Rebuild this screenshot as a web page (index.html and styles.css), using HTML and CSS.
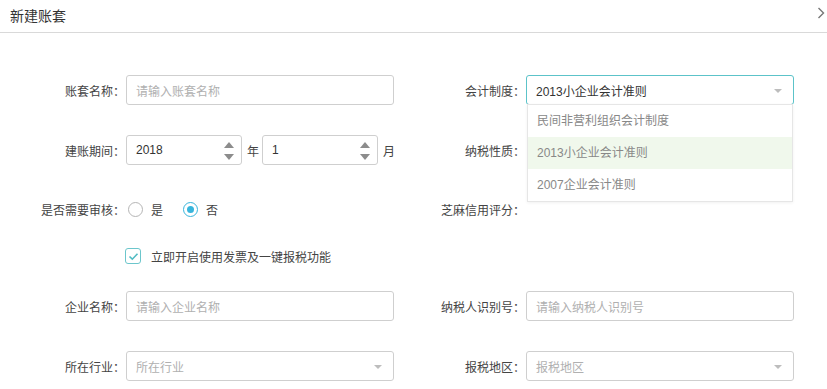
FILE: index.html
```html
<!DOCTYPE html>
<html lang="zh">
<head>
<meta charset="utf-8">
<link rel="stylesheet" href="styles.css">
</head>
<body>
<div class="header">
  <span class="title">新建账套</span>
  <svg class="chev" width="8" height="12" viewBox="0 0 8 12"><path d="M1.5 1 L6.5 6 L1.5 11" fill="none" stroke="#777" stroke-width="1.4"/></svg>
</div>
<div class="form">
  <div class="row r1">
    <label class="lbl">账套名称：</label>
    <div class="ctl"><div class="input ph">请输入账套名称</div></div>
    <label class="lbl">会计制度：</label>
    <div class="ctl sel-wrap">
      <div class="input focus">2013小企业会计准则<span class="caret"></span></div>
      <ul class="dropdown">
        <li>民间非营利组织会计制度</li>
        <li class="active">2013小企业会计准则</li>
        <li>2007企业会计准则</li>
      </ul>
    </div>
  </div>
  <div class="row r2">
    <label class="lbl">建账期间：</label>
    <div class="ctl period">
      <div class="input num">2018<span class="spin"><i class="up"></i><i class="down"></i></span></div>
      <span class="unit">年</span>
      <div class="input num">1<span class="spin"><i class="up"></i><i class="down"></i></span></div>
      <span class="unit">月</span>
    </div>
    <label class="lbl">纳税性质：</label>
    <div class="ctl"></div>
  </div>
  <div class="row r3">
    <label class="lbl">是否需要审核：</label>
    <div class="ctl radios">
      <span class="radio"></span><span class="rtxt">是</span>
      <span class="radio on"></span><span class="rtxt">否</span>
    </div>
    <label class="lbl">芝麻信用评分：</label>
    <div class="ctl"></div>
  </div>
  <div class="row r4">
    <div class="lbl"></div>
    <div class="ctl check">
      <span class="cbox"><svg width="11" height="9" viewBox="0 0 11 9"><path d="M1.5 4.5 L4.3 7.2 L9.5 1.8" fill="none" stroke="#52bcc4" stroke-width="1.6"/></svg></span>
      <span>立即开启使用发票及一键报税功能</span>
    </div>
  </div>
  <div class="row r5">
    <label class="lbl">企业名称：</label>
    <div class="ctl"><div class="input ph">请输入企业名称</div></div>
    <label class="lbl">纳税人识别号：</label>
    <div class="ctl"><div class="input ph">请输入纳税人识别号</div></div>
  </div>
  <div class="row r6">
    <label class="lbl">所在行业：</label>
    <div class="ctl"><div class="input ph">所在行业<span class="caret"></span></div></div>
    <label class="lbl">报税地区：</label>
    <div class="ctl"><div class="input ph">报税地区<span class="caret"></span></div></div>
  </div>
</div>
</body>
</html>
```
FILE: styles.css
```css
* { box-sizing: border-box; }
body {
  margin: 0;
  background: #fff;
  font-family: "Liberation Sans", "Noto Sans CJK SC", sans-serif;
  font-size: 12px;
  color: #444;
}
.header {
  height: 33px;
  border-bottom: 1px solid #d9d9d9;
  display: flex;
  align-items: center;
  justify-content: space-between;
  padding: 0 2px 0 10px;
}
.title { font-size: 14px; color: #333; margin-top: -2px; }
.chev { margin-top: -6px; }
.form { padding-top: 42px; }
.row {
  display: grid;
  grid-template-columns: 126px 268px 132px 268px;
  height: 30px;
  align-items: center;
}
.r2 { margin-top: 30px; }
.r3 { margin-top: 29px; }
.r4 { margin-top: 17px; }
.r5 { margin-top: 20px; }
.r6 { margin-top: 30px; }
.lbl {
  text-align: right;
  padding-right: 1px;
  white-space: nowrap;
  color: #444;
}
.ctl { height: 30px; display: flex; align-items: center; }
.input {
  position: relative;
  width: 100%;
  height: 30px;
  border: 1px solid #cfcfcf;
  border-radius: 3px;
  padding: 0 9px;
  display: flex;
  align-items: center;
  color: #333;
}
.input.ph { color: #b0b0b0; }
.input.focus { border-color: #5cc3c9; }
.caret {
  position: absolute;
  right: 11px;
  top: 13px;
  border-left: 4px solid transparent;
  border-right: 4px solid transparent;
  border-top: 4px solid #bdbdbd;
}
.sel-wrap { position: relative; }
.dropdown {
  position: absolute;
  left: 1px;
  right: 1px;
  top: 29px;
  margin: 0;
  padding: 0;
  list-style: none;
  background: #fff;
  border: 1px solid #e6e6e6;
  box-shadow: 0 1px 3px rgba(0,0,0,0.06);
  z-index: 2;
}
.dropdown li {
  height: 32px;
  line-height: 32px;
  padding-left: 9px;
  color: #888;
}
.dropdown li.active { background: #f0f8ec; }
.period .input.num { width: 116px; flex: none; }
.unit { width: 20px; flex: none; padding-left: 2px; text-align: center; color: #444; }
.spin {
  position: absolute;
  right: 5px;
  top: 6px;
  width: 14px;
  height: 18px;
}
.spin i {
  position: absolute;
  left: 2px;
  border-left: 5px solid transparent;
  border-right: 5px solid transparent;
}
.spin .up { top: 0; border-bottom: 6px solid #8c8c8c; }
.spin .down { bottom: 0; border-top: 6px solid #8c8c8c; }
.radios { padding-left: 2px; }
.radio {
  width: 15px;
  height: 15px;
  border: 1px solid #b5b5b5;
  border-radius: 50%;
  display: inline-block;
  position: relative;
  flex: none;
}
.radio.on { border-color: #38b5dc; }
.radio.on::after {
  content: "";
  position: absolute;
  left: 3px; top: 3px;
  width: 7px; height: 7px;
  border-radius: 50%;
  background: #38b5dc;
}
.rtxt { margin-left: 8px; margin-right: 20px; color: #444; }
.check { margin-left: -1px; }
.cbox {
  width: 16px;
  height: 16px;
  border: 1px solid #6cc6cc;
  border-radius: 3px;
  display: inline-flex;
  align-items: center;
  justify-content: center;
  margin-right: 10px;
}
.check span:last-child { color: #444; }
```
